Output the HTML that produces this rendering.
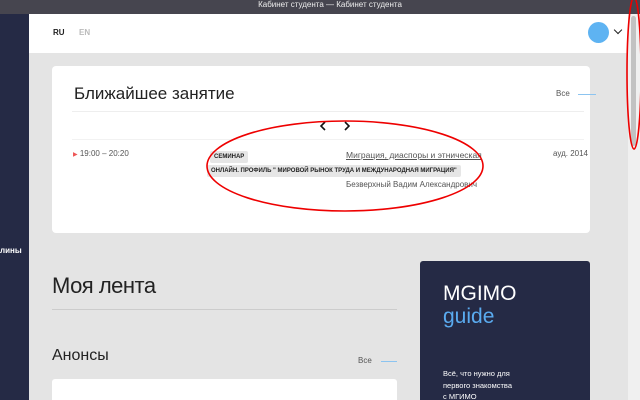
<!DOCTYPE html>
<html style="overflow:hidden"><head><meta charset="utf-8"><style>
*{margin:0;padding:0;box-sizing:border-box}
html,body{width:640px;height:400px;overflow:hidden}
body{background:#e4e4e4;font-family:"Liberation Sans",sans-serif;position:relative;color:#222}
.a{position:absolute}
</style></head><body>
<div class="a" style="left:0;top:0;width:640px;height:14px;background:#46454f;color:#eee;font-size:8px;text-align:center;line-height:10px;padding-left:20px">Кабинет студента — Кабинет студента</div>
<div class="a" style="left:0;top:14px;width:29px;height:386px;background:#252a45"></div>
<div class="a" style="left:0;top:246px;color:#fff;font-size:8px;font-weight:bold">лины</div>
<div class="a" style="left:29px;top:14px;width:599px;height:39px;background:#fff"></div>
<div class="a" style="left:628px;top:14px;width:12px;height:386px;background:#f0f0f0"></div>
<div class="a" style="left:631px;top:16px;width:5px;height:130px;background:#c2c2c2;border-radius:3px"></div>
<div class="a" style="left:53px;top:28px;font-size:8px;font-weight:bold">RU</div>
<div class="a" style="left:79px;top:28px;font-size:8px;font-weight:bold;color:#bbb">EN</div>
<div class="a" style="left:588px;top:22px;width:21px;height:21px;border-radius:50%;background:#5eb3f2"></div>
<div class="a" style="left:615px;top:27px;width:6px;height:6px;border-right:1.5px solid #222;border-bottom:1.5px solid #222;transform:rotate(45deg)"></div>
<div class="a" style="left:52px;top:66px;width:538px;height:167px;background:#fff;border-radius:4px"></div>
<div class="a" style="left:74px;top:84px;font-size:17px">Ближайшее занятие</div>
<div class="a" style="left:556px;top:89px;font-size:8px;color:#555">Все</div>
<div class="a" style="left:578px;top:94px;width:18px;height:1px;background:#8cc4f0"></div>
<div class="a" style="left:72px;top:111px;width:512px;height:1px;background:#eee"></div>
<svg class="a" style="left:318px;top:120px" width="32" height="12"><path d="M7 2 L3 6 L7 10 M27 2 L31 6 L27 10" fill="none" stroke="#111" stroke-width="1.6"/></svg>
<div class="a" style="left:72px;top:139px;width:512px;height:1px;background:#f2f2f2"></div>
<div class="a" style="left:73px;top:149px;font-size:8px;color:#555"><span style="color:#e55;font-size:6px">▶</span> 19:00 – 20:20</div>
<div class="a" style="left:210px;top:151px;background:#e6e6e6;font-size:6px;font-weight:bold;padding:3px 4px;border-radius:2px">СЕМИНАР</div>
<div class="a" style="left:207px;top:165px;background:#e6e6e6;font-size:6px;font-weight:bold;padding:3px 4px;border-radius:2px">ОНЛАЙН. ПРОФИЛЬ " МИРОВОЙ РЫНОК ТРУДА И МЕЖДУНАРОДНАЯ МИГРАЦИЯ"</div>
<div class="a" style="left:346px;top:150px;font-size:8.5px;color:#555;text-decoration:underline">Миграция, диаспоры и этническая</div>
<div class="a" style="left:346px;top:180px;font-size:8px;color:#555">Безверхный Вадим Александрович</div>
<div class="a" style="left:553px;top:149px;font-size:8px;color:#555">ауд. 2014</div>
<div class="a" style="left:52px;top:273px;font-size:22px;letter-spacing:-0.5px">Моя лента</div>
<div class="a" style="left:52px;top:309px;width:345px;height:1px;background:#ccc"></div>
<div class="a" style="left:52px;top:347px;font-size:16px">Анонсы</div>
<div class="a" style="left:358px;top:356px;font-size:8px;color:#555">Все</div>
<div class="a" style="left:381px;top:361px;width:16px;height:1px;background:#8cc4f0"></div>
<div class="a" style="left:52px;top:379px;width:345px;height:21px;background:#fff;border-radius:3px 3px 0 0"></div>
<div class="a" style="left:420px;top:261px;width:170px;height:139px;background:#252a45;border-radius:3px 3px 0 0"></div>
<div class="a" style="left:443px;top:282px;font-size:21px;color:#fff">MGIMO</div>
<div class="a" style="left:443px;top:305px;font-size:21px;color:#5aabf0">guide</div>
<div class="a" style="left:443px;top:368px;font-size:7.5px;color:#fff;line-height:11.5px">Всё, что нужно для<br>первого знакомства<br>с МГИМО</div>
<svg class="a" style="left:0;top:0" width="640" height="400"><ellipse cx="345" cy="166" rx="138" ry="45" fill="none" stroke="#e00" stroke-width="1.6"/><ellipse cx="634" cy="73" rx="7" ry="76" fill="none" stroke="#e00" stroke-width="1.6"/></svg>
</body></html>
